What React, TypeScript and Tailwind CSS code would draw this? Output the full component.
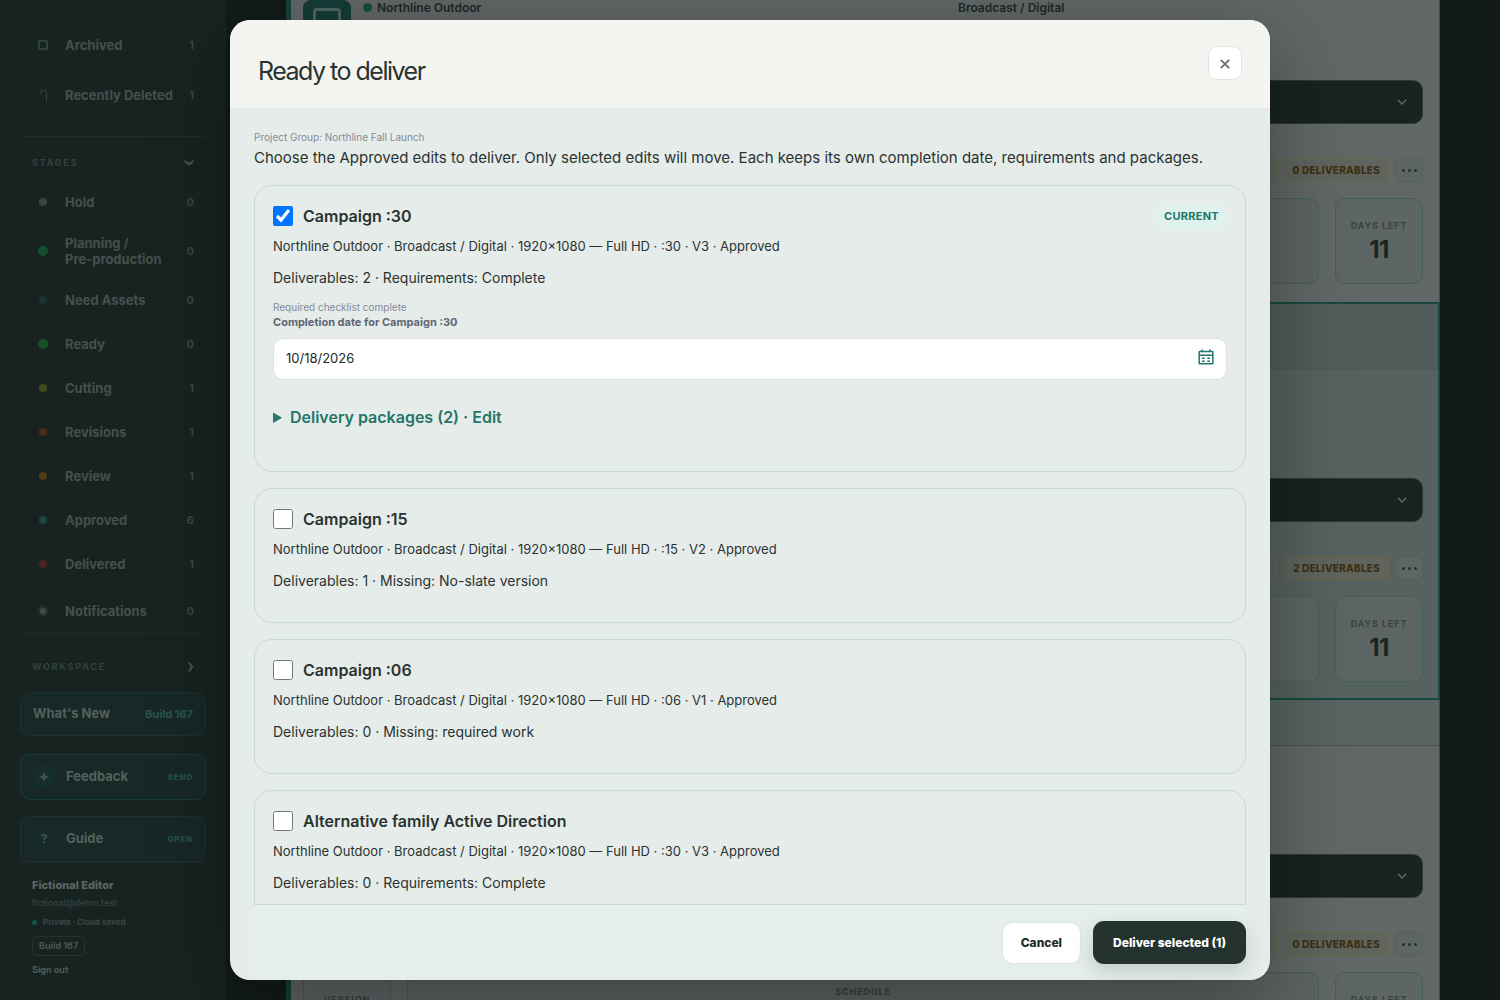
import { useState, type ReactNode } from "react";

type Stage = { label: ReactNode; count: number; dot: string; tall?: boolean };

const stages: Stage[] = [
  { label: "Hold", count: 0, dot: "size-2 bg-[#3a4543]" },
  { label: <>Planning /<br />Pre-production</>, count: 0, dot: "size-2.5 bg-[#154f2c]", tall: true },
  { label: "Need Assets", count: 0, dot: "size-2 bg-[#173430]" },
  { label: "Ready", count: 0, dot: "size-2.5 bg-[#154f2c]" },
  { label: "Cutting", count: 1, dot: "size-2 bg-[#3f4a1e]" },
  { label: "Revisions", count: 1, dot: "size-2 bg-[#4e2d1b]" },
  { label: "Review", count: 1, dot: "size-2 bg-[#4f3c17]" },
  { label: "Approved", count: 6, dot: "size-2 bg-[#1a4440]" },
  { label: "Delivered", count: 1, dot: "size-2 bg-[#4b2424]" },
];

type Edit = { id: string; title: string; meta: string; summary: string; current?: boolean };

const edits: Edit[] = [
  {
    id: "c30",
    title: "Campaign :30",
    meta: "Northline Outdoor · Broadcast / Digital · 1920×1080 — Full HD · :30 · V3 · Approved",
    summary: "Deliverables: 2 · Requirements: Complete",
    current: true,
  },
  {
    id: "c15",
    title: "Campaign :15",
    meta: "Northline Outdoor · Broadcast / Digital · 1920×1080 — Full HD · :15 · V2 · Approved",
    summary: "Deliverables: 1 · Missing: No-slate version",
  },
  {
    id: "c06",
    title: "Campaign :06",
    meta: "Northline Outdoor · Broadcast / Digital · 1920×1080 — Full HD · :06 · V1 · Approved",
    summary: "Deliverables: 0 · Missing: required work",
  },
  {
    id: "alt",
    title: "Alternative family Active Direction",
    meta: "Northline Outdoor · Broadcast / Digital · 1920×1080 — Full HD · :30 · V3 · Approved",
    summary: "Deliverables: 0 · Requirements: Complete",
  },
];

function NavRow({ icon, label, count, height }: { icon: ReactNode; label: ReactNode; count: number; height: string }) {
  return (
    <button type="button" className={`flex w-full items-center pr-3 pl-3 text-left ${height}`}>
      <span className="flex w-[22px] shrink-0 items-center justify-center">{icon}</span>
      <span className="ml-[11px] flex-1 text-[13px] leading-4 font-bold whitespace-nowrap text-[#43504d]">{label}</span>
      <span className="text-[11px] font-bold text-[#354743]">{count}</span>
    </button>
  );
}

function Sidebar() {
  return (
    <aside className="flex w-[226px] shrink-0 flex-col bg-[#182321] px-5 pt-5">
      <NavRow
        height="h-[50px]"
        label="Archived"
        count={1}
        icon={<span className="size-2.5 rounded-[2px] border-2 border-[#2e423e]" />}
      />
      <NavRow
        height="h-[50px]"
        label="Recently Deleted"
        count={1}
        icon={
          <svg width="10" height="14" viewBox="0 0 10 14" fill="none" stroke="#2e423e" aria-hidden="true">
            <path d="M8.500 13V5a3 3 0 0 0-6 0M1 4l1.500 1.500L4.500 4" />
          </svg>
        }
      />
      <div className="mt-4 flex h-[44px] items-center justify-between border-t border-[#1e2d2a] px-3 pt-2">
        <span className="text-[9px] font-bold tracking-[0.2em] text-[#30433f]">STAGES</span>
        <svg width="10" height="6" viewBox="0 0 10 6" fill="#43514e" aria-hidden="true">
          <path d="M.3 0 5 2.400 9.700 0v2.200L5 5.800.300 2.200z" />
        </svg>
      </div>
      {stages.map((s, i) => (
        <NavRow
          key={i}
          height={s.tall ? "h-[54px]" : "h-11"}
          label={s.label}
          count={s.count}
          icon={<span className={`rounded-full ${s.dot}`} />}
        />
      ))}
      <div className="border-b border-[#1e2d2a] pt-[3px]">
        <NavRow
          height="h-11"
          label="Notifications"
          count={0}
          icon={
            <svg width="10" height="10" viewBox="0 0 10 10" aria-hidden="true">
              <circle cx="5" cy="5" r="4.500" fill="none" stroke="#34443f" strokeWidth="0.800" />
              <circle cx="5" cy="5" r="3.200" fill="#3a4a46" />
            </svg>
          }
        />
      </div>
      <div className="flex h-[58px] items-center justify-between px-3 pt-2">
        <span className="text-[9px] font-bold tracking-[0.2em] text-[#30433f]">WORKSPACE</span>
        <svg width="6" height="10" viewBox="0 0 6 10" fill="#45524f" aria-hidden="true">
          <path d="M0 .5h2L5.500 5 2 9.500H0L2.600 5z" />
        </svg>
      </div>
      <button type="button" className="flex h-11 shrink-0 items-center justify-between rounded-[10px] border border-[#1b322e] bg-[#182826] px-3">
        <span className="text-[13px] font-bold text-[#54605d]">What&apos;s New</span>
        <span className="text-[11px] font-bold text-[#2a544d]">Build 167</span>
      </button>
      <button type="button" className="mt-[18px] flex h-[46px] shrink-0 items-center rounded-[10px] border border-[#173d37] bg-[#182826] px-3">
        <span className="flex size-[22px] items-center justify-center rounded-md bg-[#162e2a]">
          <svg width="10" height="10" viewBox="0 0 10 10" fill="#3f524e" aria-hidden="true">
            <path d="M5 0 6.600 3.400 10 5 6.600 6.600 5 10 3.400 6.600 0 5l3.400-1.600z" />
          </svg>
        </span>
        <span className="ml-[11px] flex-1 text-left text-[13px] font-bold text-[#54605d]">Feedback</span>
        <span className="text-[8px] font-extrabold tracking-widest text-[#25504a]">SEND</span>
      </button>
      <button type="button" className="mt-4 flex h-[46px] shrink-0 items-center rounded-[10px] border border-[#1b322e] bg-[#182826] px-3">
        <span className="flex size-[22px] items-center justify-center rounded-md bg-[#162b28] text-[12px] font-bold text-[#3f524e]">?</span>
        <span className="ml-[11px] flex-1 text-left text-[13px] font-bold text-[#54605d]">Guide</span>
        <span className="text-[8px] font-extrabold tracking-widest text-[#25504a]">OPEN</span>
      </button>
      <div className="flex flex-col items-start border-t border-[#1e2d2a] px-3 pt-[14px]">
        <span className="text-[11px] leading-4 font-extrabold text-[#5a6663]">Fictional Editor</span>
        <span className="mt-1 text-[9px] leading-3 text-[#3a4a46]">fictional@demo.test</span>
        <span className="mt-[7px] flex items-center gap-1.5 text-[8px] leading-3 font-bold text-[#384844]">
          <span className="size-[5px] rounded-full bg-[#17534a]" />
          Private · Cloud saved
        </span>
        <span className="mt-2 flex h-5 items-center rounded border border-[#25332f] px-1.5 text-[9px] font-bold text-[#485652]">Build 167</span>
        <button type="button" className="mt-2 text-[9px] leading-3 font-bold text-[#505d59]">Sign out</button>
      </div>
    </aside>
  );
}

function StatBox({ label, value, tone }: { label: string; value?: string; tone: string }) {
  return (
    <div className={`flex h-[86px] flex-col items-center rounded-[10px] border border-[#445e58] pt-[21px] ${tone}`}>
      <span className="text-[9px] leading-3 font-bold tracking-widest whitespace-nowrap text-[#39433f]">{label}</span>
      {value && <span className="mt-1 text-2xl leading-7 font-bold tracking-tight text-[#1b2422]">{value}</span>}
    </div>
  );
}

function ProjectBody({ deliverables, lead, active, client }: { deliverables: number; lead: string; active?: boolean; client?: string }) {
  const chip = "h-6 items-center rounded-md border border-[#6b6549] bg-[#5f645f] px-2 text-[10px] font-extrabold tracking-wide text-[#3d2f10]";
  const tone = active ? "bg-[#5c6564]" : "bg-[#5d6665]";
  return (
    <div className={active ? "pr-[15px] pb-4 pl-3" : "pr-4 pb-[18px] pl-3"}>
      <div className={`flex items-start ${lead}`}>
        {client && (
          <>
            <div className="flex size-12 shrink-0 items-center justify-center rounded-lg bg-[#153b36]">
              <span className="mt-0.5 h-[34px] w-7 rounded border-[3px] border-[#4d6561]" />
            </div>
            <div className="ml-3 flex flex-1 items-center text-[12px] leading-[15px] font-semibold text-[#1d2725]">
              <span className="mr-[5px] size-[9px] rounded-full bg-[#164d43]" />
              <span className="w-[581px] shrink-0">{client}</span>
              <span>Broadcast / Digital</span>
            </div>
          </>
        )}
      </div>
      <button type="button" aria-label="Expand edit" className="flex h-11 w-full items-center justify-end rounded-[10px] border border-[#2c3936] bg-[#172321] pr-[15px]">
        <svg width="10" height="6" viewBox="0 0 10 6" fill="none" stroke="#5b6663" strokeWidth="1.500" aria-hidden="true">
          <path d="m.8.800 4.200 4.200L9.200.800" />
        </svg>
      </button>
      <div className="mt-[34px] flex justify-end gap-1.5">
        <span className={`w-24 ${chip}`} />
        <span className={`flex ${chip}`}>{deliverables} DELIVERABLES</span>
        <button type="button" aria-label="More" className="flex h-6 w-7 items-center justify-center gap-[3px] rounded-md border border-[#53605d] bg-[#5d6665]">
          <span className="size-[3px] rounded-full bg-[#26302e]" />
          <span className="size-[3px] rounded-full bg-[#26302e]" />
          <span className="size-[3px] rounded-full bg-[#26302e]" />
        </button>
      </div>
      <div className="mt-4 grid grid-cols-[88px_1fr_88px] gap-4">
        <StatBox label="VERSION" tone={tone} />
        <div className={`flex h-[86px] justify-center rounded-[10px] border border-[#445e58] pt-[13px] ${active ? "bg-[#5c6564]" : "bg-[#5c6461]"}`}>
          <span className="text-[9px] leading-3 font-extrabold tracking-widest text-[#39433f]">SCHEDULE</span>
        </div>
        <StatBox label="DAYS LEFT" value="11" tone={tone} />
      </div>
    </div>
  );
}

function EditCard({ edit, checked, onToggle }: { edit: Edit; checked: boolean; onToggle: () => void }) {
  return (
    <section className="shrink-0 rounded-[18px] border border-[#c5dbd5] px-[18px] pt-[18px] pb-[31px]">
      <div className="flex h-6 items-center">
        <input id={edit.id} type="checkbox" checked={checked} onChange={onToggle} className="size-5 accent-[#0075ff]" />
        <label htmlFor={edit.id} className="ml-2.5 flex-1 text-base leading-6 font-semibold text-[#2a3331]">{edit.title}</label>
        {edit.current && (
          <span className="flex h-[25px] items-center rounded-full bg-[#dff2ed] px-2 text-[11px] font-bold tracking-wide text-[#22766a]">CURRENT</span>
        )}
      </div>
      <p className="mt-2 text-[13px] leading-5 text-[#2a3331]">{edit.meta}</p>
      <p className="mt-3 text-sm leading-5 text-[#2a3331]">{edit.summary}</p>
      {edit.current && (
        <>
          <p className="mt-3 text-[10px] leading-[14px] text-[#858a98]">Required checklist complete</p>
          <label htmlFor="completion" className="block text-[11px] leading-4 font-bold text-[#606675]">Completion date for Campaign :30</label>
          <div className="mt-2 flex h-[42px] items-center rounded-[10px] border border-[#dedfd9] bg-white pr-3 pl-3">
            <input id="completion" type="text" defaultValue="10/18/2026" className="min-w-0 flex-1 bg-transparent text-[13px] text-[#202a28] outline-none" />
            <button type="button" aria-label="Open calendar">
              <svg className="mb-1" width="16" height="16" viewBox="0 0 16 16" fill="none" stroke="#22766a" strokeWidth="1.500" aria-hidden="true">
                <rect x="1.200" y="2.500" width="13.600" height="12.300" rx="0.500" />
                <path d="M1 6.200h14M4 .5v2.500M12 .5v2.500" />
                <path d="M4 9.300h2.700M9.300 9.300H12M4 12.200h2.700M9.300 12.200H12" strokeWidth="1.600" />
              </svg>
            </button>
          </div>
          <details className="mt-[25px] mb-[11px]">
            <summary className="cursor-pointer text-base leading-6 font-semibold text-[#22766a]">Delivery packages (2) · Edit</summary>
          </details>
        </>
      )}
    </section>
  );
}

export default function App() {
  const [selected, setSelected] = useState<string[]>(["c30"]);
  const toggle = (id: string) =>
    setSelected((cur) => (cur.includes(id) ? cur.filter((x) => x !== id) : [...cur, id]));

  return (
    <div className="relative flex h-screen overflow-hidden bg-[#121b19] font-['Inter',sans-serif]">
      <Sidebar />
      <main className="min-w-0 flex-1 px-[60px]">
        <div className="border-r border-l-[5px] border-r-[#3c4b48] border-l-[#17403a] bg-[#616766]">
          <ProjectBody deliverables={0} lead="h-20" client="Northline Outdoor" />
          <div className="-mr-px border-2 border-l-0 border-[#16493f] bg-[#566260]">
            <div className="h-[66px] border-b border-[#4a5956] bg-[#505d5a]" />
            <ProjectBody deliverables={2} lead="h-[108px]" active />
          </div>
          <div className="h-[46px] border-b border-[#47534f] bg-[#586461]" />
          <ProjectBody deliverables={0} lead="h-[108px]" />
        </div>
      </main>

      <div className="absolute inset-0 flex justify-center p-5">
        <div role="dialog" aria-modal="true" aria-labelledby="dialog-title" className="flex w-full max-w-[1040px] flex-col overflow-hidden rounded-[20px] bg-[#e6ecea] shadow-[0_24px_80px_rgba(0,0,0,0.35)]">
          <header className="flex h-[88px] shrink-0 items-start justify-between bg-[#f4f4f0] px-7 pt-[26px]">
            <h1 id="dialog-title" className="mt-[9px] text-[25px] leading-8 font-normal tracking-[-0.06em] text-[#2a3331]">Ready to deliver</h1>
            <button type="button" aria-label="Close" className="flex size-[34px] items-center justify-center rounded-[9px] border border-[#dbe8e4] bg-white">
              <svg className="mt-0.5" width="10" height="10" viewBox="0 0 10 10" stroke="#666c79" strokeWidth="1.800" aria-hidden="true">
                <path d="m.8.800 8.400 8.400M9.200.800.800 9.200" />
              </svg>
            </button>
          </header>
          <div className="flex min-h-0 flex-1 flex-col overflow-y-auto px-6 pt-[22px] [scrollbar-width:none]">
            <p className="text-[10px] leading-[14px] text-[#858a98]">Project Group: Northline Fall Launch</p>
            <p className="mb-[13px] text-[15px] leading-7 text-[#2a3331]">
              Choose the Approved edits to deliver. Only selected edits will move. Each keeps its own completion date, requirements and packages.
            </p>
            <div className="flex flex-col gap-4">
              {edits.map((e) => (
                <EditCard key={e.id} edit={e} checked={selected.includes(e.id)} onToggle={() => toggle(e.id)} />
              ))}
            </div>
          </div>
          <footer className="shrink-0 px-6">
            <div className="flex items-center justify-end gap-3 border-t border-[#c5dbd5] bg-[#e5eeea] py-4">
              <button type="button" className="h-[42px] rounded-[11px] border border-[#dde6e2] bg-white px-[18px] text-xs font-extrabold text-[#202a28]">Cancel</button>
              <button type="button" className="h-[43px] rounded-[11px] bg-[#243230] px-5 text-xs font-extrabold text-white shadow-[0_8px_20px_rgba(36,50,48,0.18)]">
                Deliver selected ({selected.length})
              </button>
            </div>
          </footer>
        </div>
      </div>
    </div>
  );
}
